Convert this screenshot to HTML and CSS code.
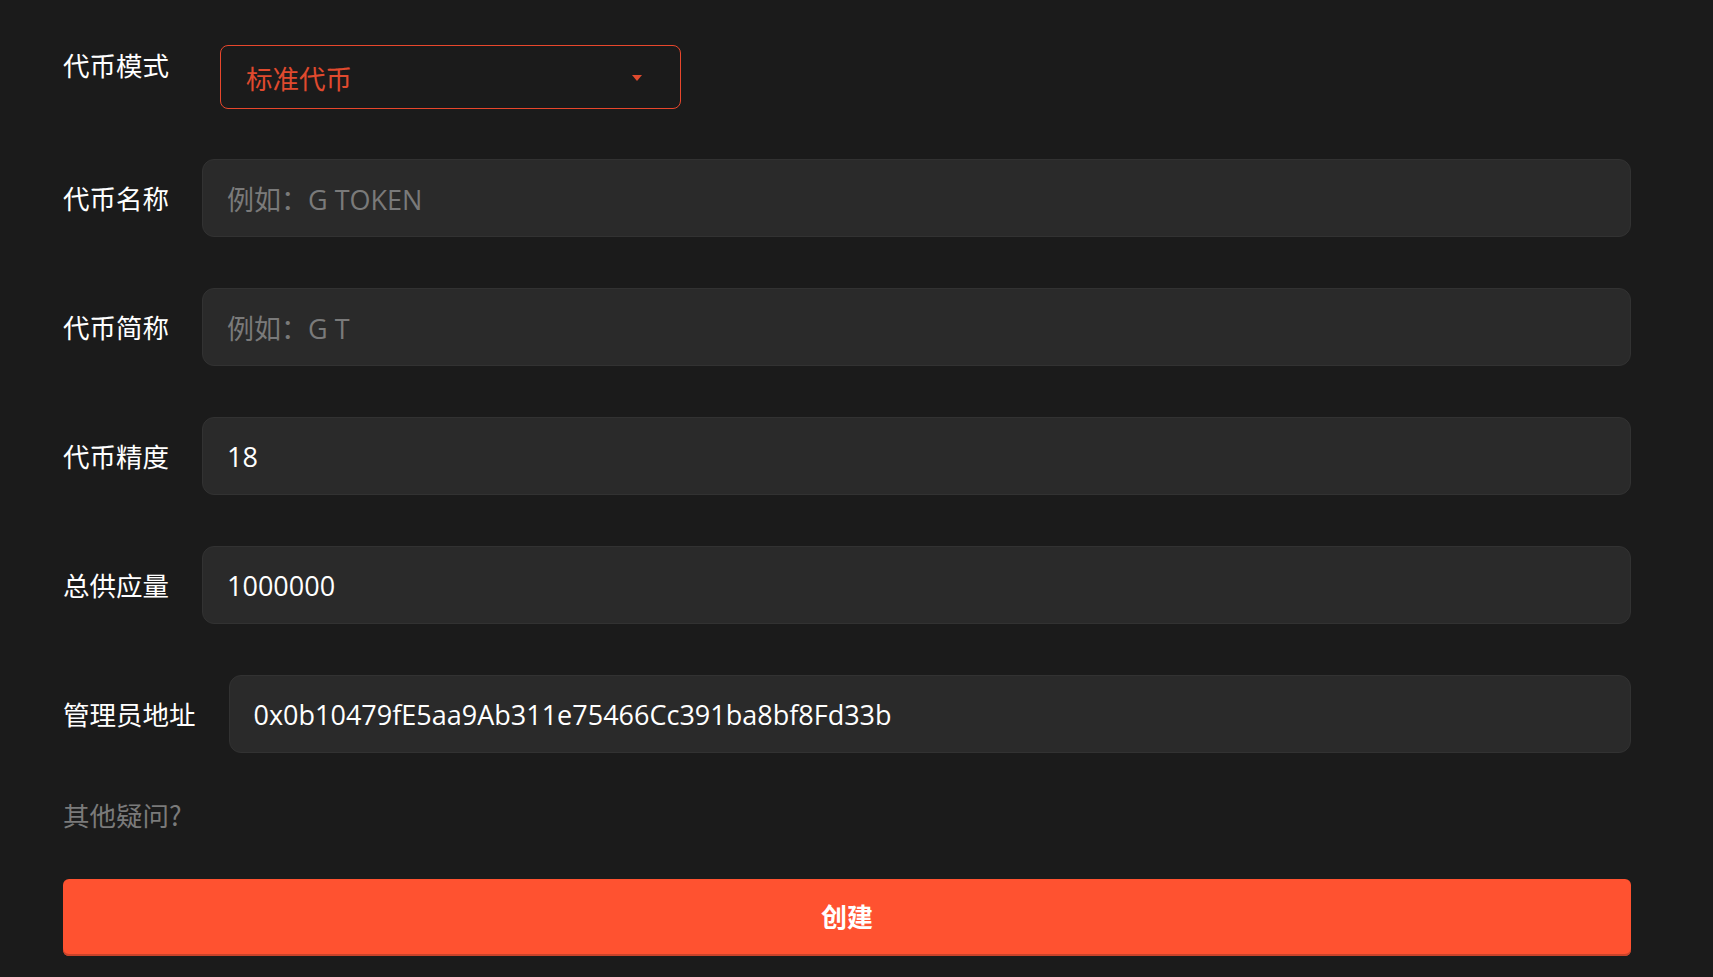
FILE: index.html
```html
<!DOCTYPE html>
<html lang="zh-CN">
<head>
<meta charset="utf-8">
<title>创建代币</title>
<link rel="stylesheet" href="styles.css">
</head>
<body>
<main class="form">
  <div class="row row-select">
    <label class="label">代币模式</label>
    <div class="select">
      <span class="select-value">标准代币</span>
      <svg class="caret" width="10" height="6" viewBox="0 0 10 6"><path d="M0 0h10L5 6z" fill="#e04a2e"/></svg>
    </div>
  </div>
  <div class="row">
    <label class="label">代币名称</label>
    <div class="input"><span class="placeholder">例如：G TOKEN</span></div>
  </div>
  <div class="row">
    <label class="label">代币简称</label>
    <div class="input"><span class="placeholder">例如：G T</span></div>
  </div>
  <div class="row">
    <label class="label">代币精度</label>
    <div class="input"><span class="value">18</span></div>
  </div>
  <div class="row">
    <label class="label">总供应量</label>
    <div class="input"><span class="value">1000000</span></div>
  </div>
  <div class="row row-last">
    <label class="label">管理员地址</label>
    <div class="input"><span class="value">0x0b10479fE5aa9Ab311e75466Cc391ba8bf8Fd33b</span></div>
  </div>
  <div class="help">其他疑问?</div>
  <button class="submit">创建</button>
</main>
</body>
</html>
```

FILE: styles.css
```css
html, body {
  margin: 0;
  padding: 0;
  background: #1b1b1b;
}
body {
  font-family: "Open Sans", "Noto Sans CJK SC", sans-serif;
  color: #ffffff;
}
.form {
  padding: 45px 82px 0 63px;
  display: flex;
  flex-direction: column;
}
.row {
  display: flex;
  align-items: center;
  gap: 33px;
  height: 78px;
  margin-bottom: 51px;
}
.row-select {
  align-items: flex-start;
  gap: 51px;
  height: 64px;
  margin-bottom: 50px;
}
.row-last {
  margin-bottom: 0;
}
.label {
  font-family: "Noto Sans CJK SC", sans-serif;
  font-size: 26.5px;
  line-height: 40px;
  color: #ffffff;
  white-space: nowrap;
}
.select {
  box-sizing: border-box;
  width: 461px;
  height: 64px;
  border: 1px solid #e8472c;
  border-radius: 8px;
  display: flex;
  align-items: center;
  justify-content: space-between;
  padding: 0 38px 0 25px;
}
.select-value {
  font-family: "Noto Sans CJK SC", sans-serif;
  font-size: 26.5px;
  color: #e04a2e;
}
.caret {
  display: block;
  margin-top: 1px;
}
.input {
  box-sizing: border-box;
  flex: 1;
  height: 78px;
  background: #2a2a2a;
  border: 1px solid #323232;
  border-radius: 12px;
  display: flex;
  align-items: center;
  padding: 0 24px;
  font-size: 27px;
}
.placeholder {
  color: #7a7a7a;
}
.value {
  color: #ffffff;
}
.help {
  font-family: "Noto Sans CJK SC", sans-serif;
  font-size: 26.5px;
  color: #7a7a7a;
  line-height: 40px;
  margin-top: 42px;
}
.submit {
  margin-top: 44px;
  height: 77px;
  border: none;
  border-radius: 6px;
  background: #ff5230;
  box-shadow: inset 0 -2px 0 #c8432a;
  color: #ffffff;
  font-family: "Noto Sans CJK SC", sans-serif;
  font-weight: 700;
  font-size: 26px;
  line-height: 1;
  padding: 0 0 3px;
  cursor: pointer;
}
```
